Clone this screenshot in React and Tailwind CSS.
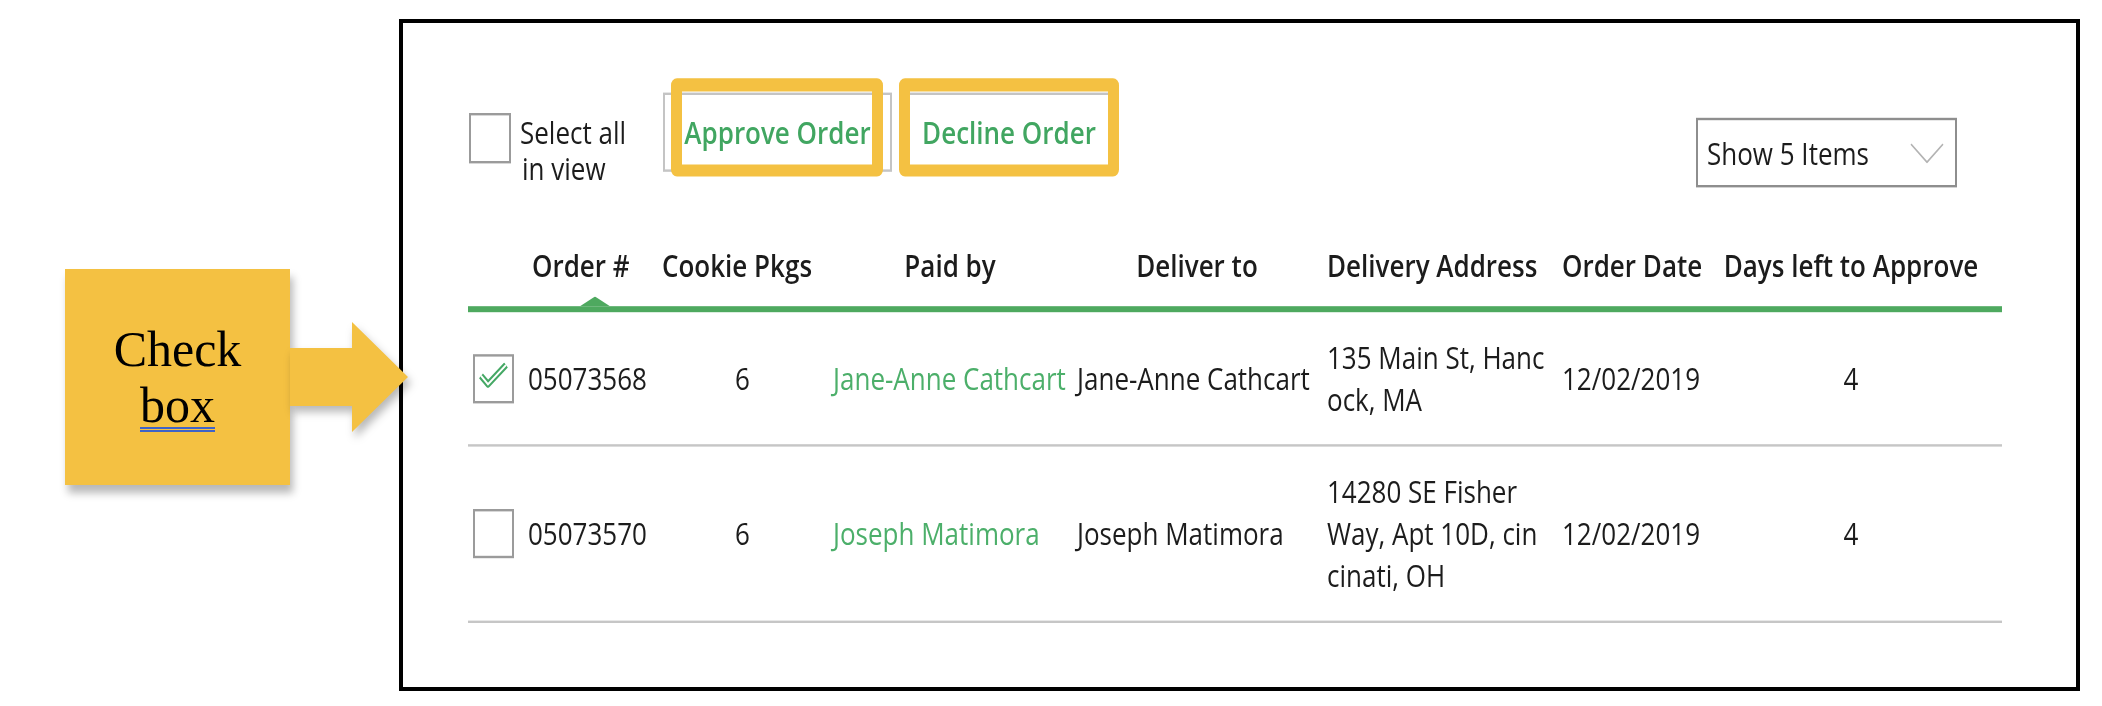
import React from 'react';

const rows = [
  {
    checked: true,
    id: '05073568',
    pkgs: 6,
    paidBy: 'Jane-Anne Cathcart',
    deliverTo: 'Jane-Anne Cathcart',
    address: ['135 Main St, Hanc', 'ock, MA'],
    date: '12/02/2019',
    days: 4,
    height: 'h-[110px]',
  },
  {
    checked: false,
    id: '05073570',
    pkgs: 6,
    paidBy: 'Joseph Matimora',
    deliverTo: 'Joseph Matimora',
    address: ['14280 SE Fisher', 'Way, Apt 10D, cin', 'cinati, OH'],
    date: '12/02/2019',
    days: 4,
    height: 'h-[145px]',
  },
];

function CheckBox({ checked, className }) {
  return (
    <div className={`flex shrink-0 items-center justify-center border-2 border-[#9b9b9b] bg-white ${className}`}>
      {checked && (
        <svg width="30" height="21" viewBox="0 0 30 21" className="mb-[5px]">
          <path d="M2 11 L9 18 L27 2" fill="none" stroke="#45a865" strokeWidth="5.5" strokeLinejoin="miter" />
          <path d="M2 11 L9 18 L27 2" fill="none" stroke="#ffffff" strokeWidth="1.8" strokeLinejoin="miter" />
        </svg>
      )}
    </div>
  );
}

export default function App() {
  return (
    <div className="flex h-[706px] w-[2102px] items-start overflow-hidden bg-white">
      {/* Callout */}
      <div className="relative z-10 ml-[65px] mt-[269px] flex h-[216px] w-[225px] shrink-0 flex-col items-center justify-center bg-[#f4c142] font-['Liberation_Serif',serif] text-[50px] leading-[56px] text-black shadow-[3px_8px_8px_rgba(0,0,0,0.28)]">
        <span>Check</span>
        <span className="underline decoration-[#3f63c8] decoration-double decoration-2 underline-offset-[5px]">box</span>
        <svg
          className="absolute left-full top-[51px] drop-shadow-[3px_6px_4px_rgba(0,0,0,0.28)]"
          width="120"
          height="115"
          viewBox="0 0 120 115"
        >
          <polygon points="0,28 62,28 62,2 118,57 62,112 62,86 0,86" fill="#f4c142" />
        </svg>
      </div>

      {/* Screenshot frame */}
      <div className="ml-[109px] mt-[19px] h-[672px] w-[1681px] shrink-0 border-4 border-black font-['Open_Sans',sans-serif] text-[26px] text-[#1c1c1c]">
        <div className="origin-top scale-y-[1.2]">
          {/* Toolbar */}
          <div className="flex h-[185px] items-start pl-[66px] pr-[119px] pt-[58px]">
            <CheckBox className="mt-[17px] h-[42px] w-[42px]" />
            <div className="ml-[9px] mt-[18px] w-[143px] leading-[30px]">
              <div>Select all</div>
              <div className="pl-[2px]">in view</div>
            </div>
            <div className="relative flex h-[66px] w-[229px] items-center justify-center border-2 border-[#c4c4c4] font-semibold text-[#41a661]">
              Approve Order
              <span className="absolute left-[6px] top-[-14px] h-[82px] w-[212px] rounded-[6px] border-x-[11px] border-t-[11px] border-b-[10px] border-[#f4c142]" />
            </div>
            <div className="relative ml-[11px] flex h-[66px] w-[212px] items-center justify-center border-2 border-[#c4c4c4] font-semibold text-[#41a661]">
              Decline Order
              <span className="absolute left-[-6px] top-[-14px] h-[82px] w-[220px] rounded-[6px] border-x-[11px] border-t-[11px] border-b-[10px] border-[#f4c142]" />
            </div>
            <div className="flex-1" />
            <div className="mt-[21px] flex h-[58px] w-[261px] items-center justify-between border-2 border-[#8e8e8e] pl-[9px] pr-[11px]">
              <span>Show 5 Items</span>
              <svg width="34" height="17" viewBox="0 0 34 17">
                <polyline points="1,1 17,16 33,1" fill="none" stroke="#b3b3b3" strokeWidth="1.5" />
              </svg>
            </div>
          </div>

          {/* Header */}
          <div className="relative ml-[65px] grid h-[51px] w-[1534px] grid-cols-[55px_134px_171px_244px_250px_235px_163px_262px] font-semibold leading-[34px] whitespace-nowrap">
            <div />
            <div className="pl-[9px]">Order #</div>
            <div className="pl-[5px]">Cookie Pkgs</div>
            <div className="text-center">Paid by</div>
            <div className="text-center">Deliver to</div>
            <div className="pl-[5px]">Delivery Address</div>
            <div className="pl-[5px]">Order Date</div>
            <div className="text-center">Days left to Approve</div>
            <svg className="absolute bottom-0 left-[112px]" width="30" height="8" viewBox="0 0 30 8">
              <polygon points="0,8 15,0 30,8" fill="#4ea95f" />
            </svg>
          </div>
          <div className="ml-[65px] h-[5px] w-[1534px] bg-[#4ea95f]" />

          {/* Rows */}
          <div className="ml-[65px] w-[1534px]">
            {rows.map(r => (
              <div key={r.id}>
                <div className={`grid grid-cols-[55px_134px_171px_244px_250px_235px_163px_262px] items-center whitespace-nowrap ${r.height}`}>
                  <div className="pl-[5px]">
                    <CheckBox checked={r.checked} className="h-[41px] w-[41px]" />
                  </div>
                  <div className="pl-[5px]">{r.id}</div>
                  <div className="text-center">{r.pkgs}</div>
                  <div className="pl-[5px] text-[#4caf6a]">{r.paidBy}</div>
                  <div className="pl-[5px]">{r.deliverTo}</div>
                  <div className="pl-[5px] leading-[35px]">
                    {r.address.map(line => (
                      <div key={line}>{line}</div>
                    ))}
                  </div>
                  <div className="pl-[5px]">{r.date}</div>
                  <div className="text-center">{r.days}</div>
                </div>
                <div className="h-[2px] bg-[#c6c6c6]" />
              </div>
            ))}
          </div>
        </div>
      </div>
    </div>
  );
}
